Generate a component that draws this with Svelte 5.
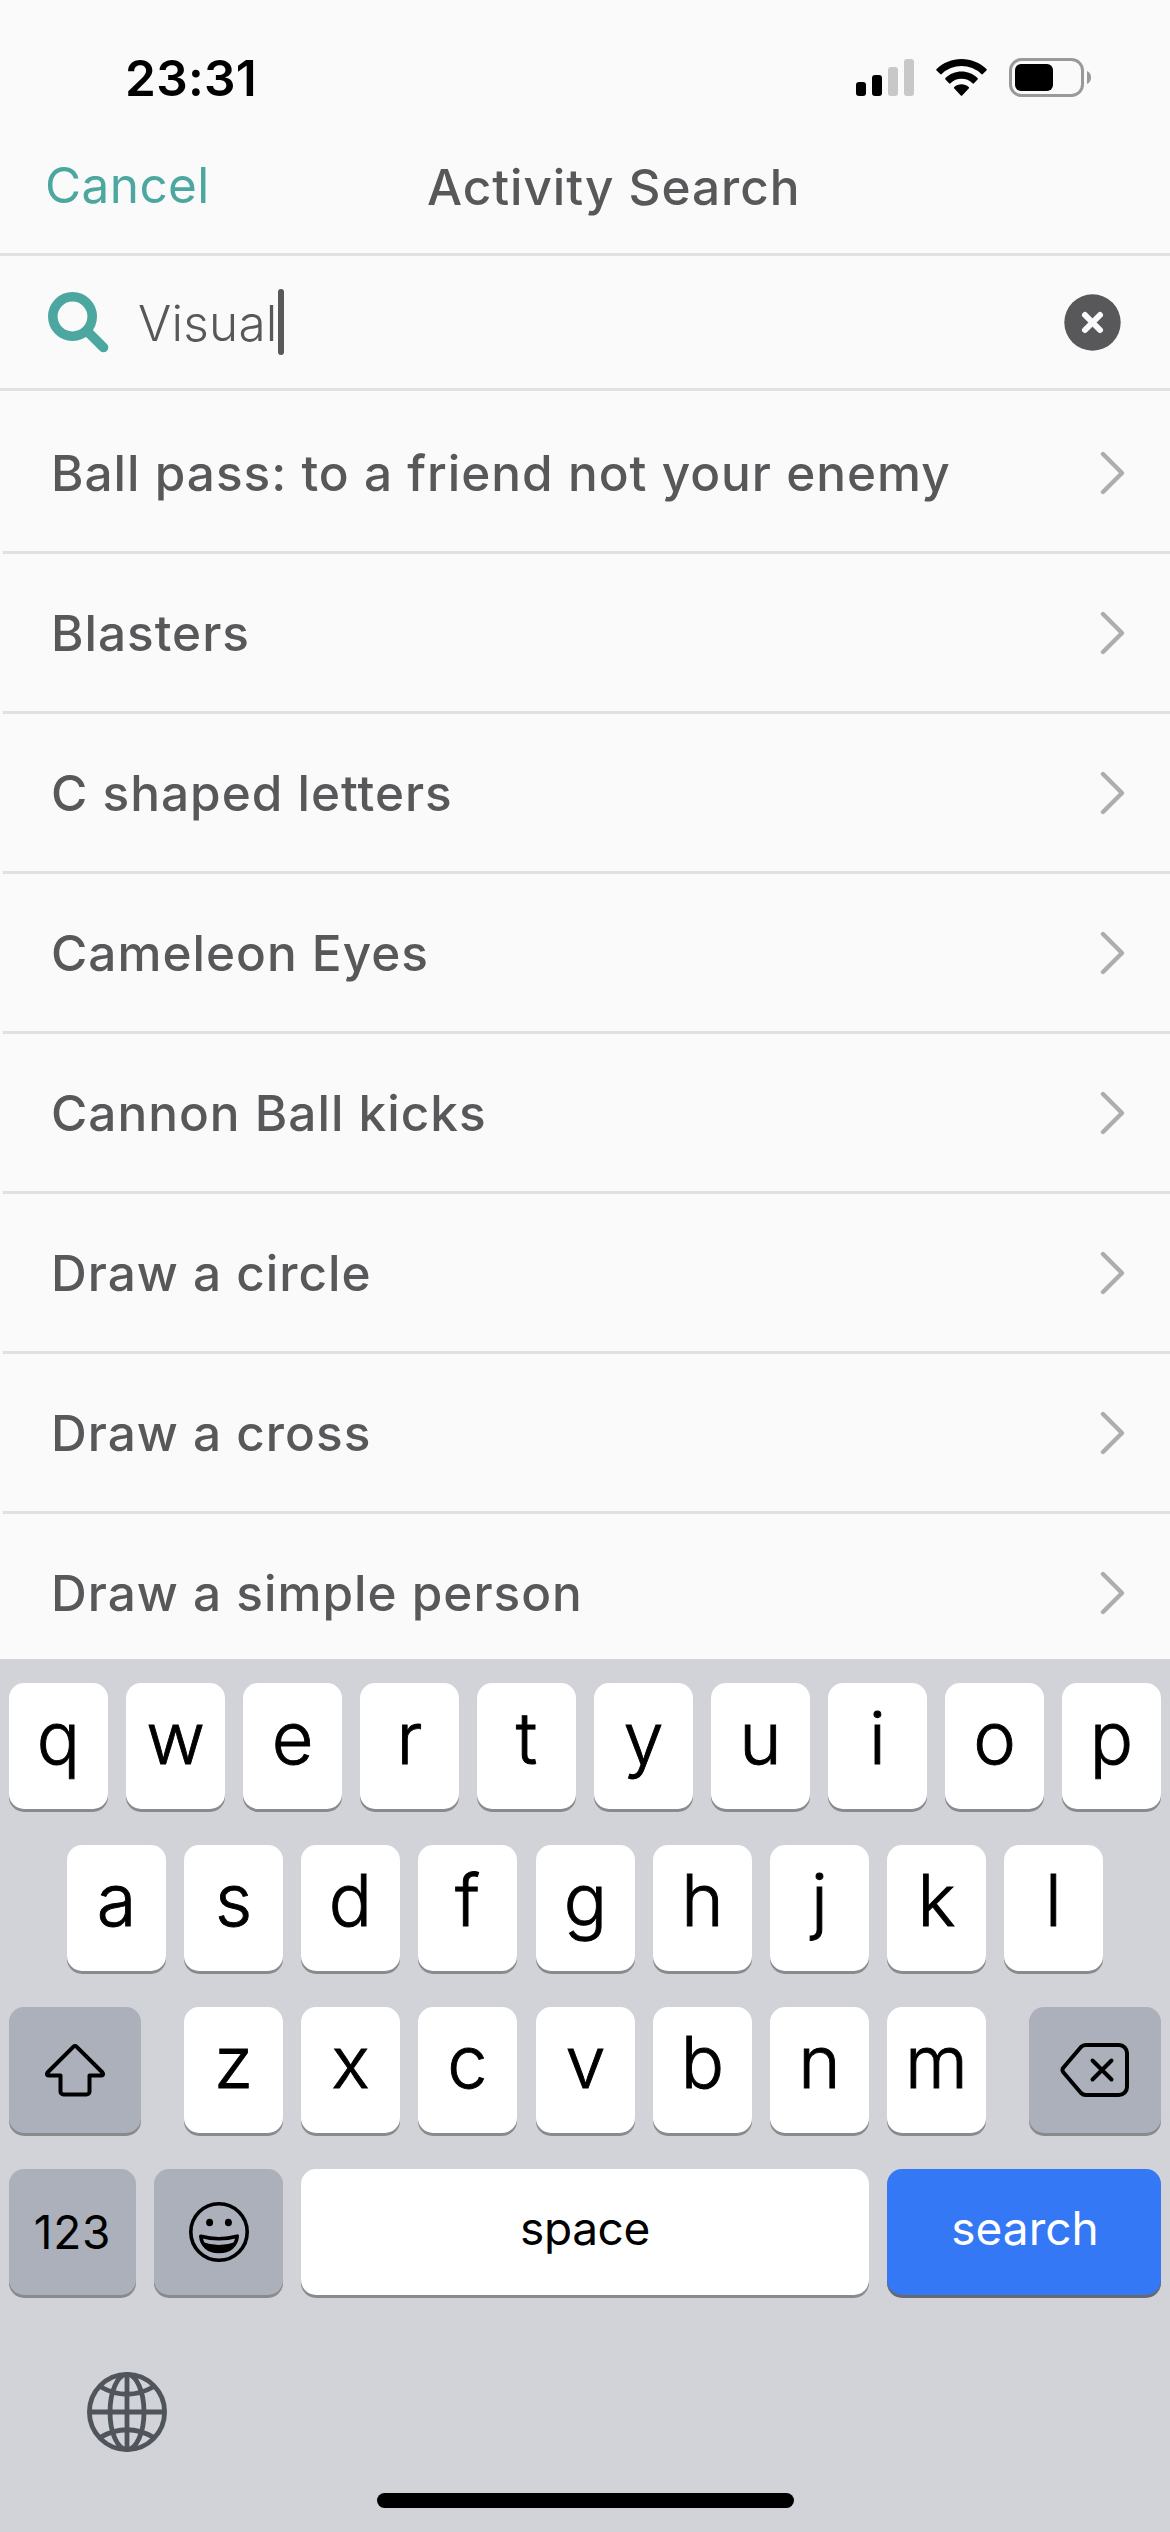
<script>
  const results = [
    'Ball pass: to a friend not your enemy',
    'Blasters',
    'C shaped letters',
    'Cameleon Eyes',
    'Cannon Ball kicks',
    'Draw a circle',
    'Draw a cross',
    'Draw a simple person'
  ];
  const rowOne = [...'qwertyuiop'];
  const rowTwo = [...'asdfghjkl'];
  const rowThree = [...'zxcvbnm'];
</script>

<div class="screen">
  <div class="status">
    <span class="time">23:31</span>
    <div class="indicators">
      <svg class="signal" width="58" height="37" viewBox="0 0 58 37">
        <rect x="0" y="23" width="10" height="14" rx="3" />
        <rect x="16" y="16" width="10" height="21" rx="3" />
        <rect class="off" x="32" y="8" width="10" height="29" rx="3" />
        <rect class="off" x="48" y="0" width="10" height="37" rx="3" />
      </svg>
      <svg class="wifi" width="51" height="37" viewBox="0 0 51 37">
        <path d="M25.500 0C35 0 44 3.700 50.400 10a1 1 0 0 1 0 1.500L46.800 15a1 1 0 0 1-1.500 0A28.500 28.500 0 0 0 5.700 15a1 1 0 0 1-1.500 0L.6 11.500a1 1 0 0 1 0-1.500C7 3.700 16 0 25.500 0Z" />
        <path d="M25.500 12.600c6 0 11.700 2.300 16 6.500a1 1 0 0 1 0 1.500L38 24.200a1 1 0 0 1-1.500 0 16 16 0 0 0-22 0 1 1 0 0 1-1.500 0l-3.500-3.600a1 1 0 0 1 0-1.500c4.300-4.200 10-6.500 16-6.500Z" />
        <path d="M25.500 25.200c2.700 0 5.200 1 7.200 2.700a1 1 0 0 1 0 1.500l-6.500 7a1 1 0 0 1-1.400 0l-6.500-7a1 1 0 0 1 0-1.500c2-1.700 4.500-2.700 7.200-2.700Z" />
      </svg>
      <svg class="battery" width="82" height="39" viewBox="0 0 82 39">
        <rect class="shell" x="1.500" y="1.500" width="72" height="36" rx="11" />
        <rect x="6" y="6" width="38" height="27" rx="6" />
        <path class="nub" d="M78 13c2.500 1 4 3.500 4 6.500s-1.500 5.500-4 6.500Z" />
      </svg>
    </div>
  </div>

  <header class="header">
    <span class="cancel">Cancel</span>
    <h1 class="title">Activity Search</h1>
  </header>

  <div class="search">
    <svg class="glass" width="62" height="62" viewBox="0 0 62 62">
      <circle cx="25.500" cy="25.500" r="19.700" />
      <path d="M41 41 56.500 56.500" />
    </svg>
    <span class="query">Visual</span>
    <span class="caret"></span>
    <svg class="clear" width="57" height="57" viewBox="0 0 57 57">
      <circle cx="28.500" cy="28.500" r="28.200" />
      <path d="M21 21 36 36M36 21 21 36" />
    </svg>
  </div>

  <ul class="results">
    {#each results as item}
      <li class="row">
        <span class="label">{item}</span>
        <svg class="chevron" width="26" height="44" viewBox="0 0 26 44">
          <path d="M3 3 22 22 3 41" />
        </svg>
      </li>
    {/each}
  </ul>

  <div class="keyboard">
    <div class="keys">
      {#each rowOne as k}<span class="key letter">{k}</span>{/each}
    </div>
    <div class="keys second">
      {#each rowTwo as k}<span class="key letter" class:middle={k === 'g'}>{k}</span>{/each}
    </div>
    <div class="keys">
      <span class="key grey shift">
        <svg width="64" height="56" viewBox="0 0 64 56">
          <path d="M30.500 4.700a2 2 0 0 1 3 0L59.500 30.500c1.300 1.400.7 3-1.200 3H46.500v16a3 3 0 0 1-3 3h-23a3 3 0 0 1-3-3v-16H5.700c-1.900 0-2.500-1.600-1.200-3Z" />
        </svg>
      </span>
      {#each rowThree as k}<span class="key letter" class:middle={k === 'v'}>{k}</span>{/each}
      <span class="key grey delete">
        <svg width="72" height="54" viewBox="0 0 72 54">
          <path d="M27 2h33a8 8 0 0 1 8 8v34a8 8 0 0 1-8 8H27a7 7 0 0 1-5-2L4.500 29.500a3.500 3.500 0 0 1 0-5L22 4a7 7 0 0 1 5-2Z" />
          <path d="M33.500 17.500 52.500 36.500M52.500 17.500 33.500 36.500" />
        </svg>
      </span>
    </div>
    <div class="keys">
      <span class="key grey numbers">123</span>
      <span class="key grey emoji">
        <svg width="62" height="62" viewBox="0 0 62 62">
          <circle class="line" cx="31" cy="31" r="28.200" />
          <ellipse cx="21.600" cy="21.500" rx="3.500" ry="3.800" />
          <ellipse cx="40.400" cy="21.500" rx="3.500" ry="3.800" />
          <path class="line" d="M12.800 35.200q18.200 5 36.400 0C48.500 45 41 50.500 31 50.500S13.500 45 12.800 35.200Z" />
          <path d="M14.500 41Q31 47 47.500 41 43 52 31 52T14.500 41Z" />
        </svg>
      </span>
      <span class="key space">space</span>
      <span class="key go">search</span>
    </div>
    <svg class="globe" width="80" height="80" viewBox="0 0 80 80">
      <circle cx="40" cy="40" r="37.600" />
      <ellipse cx="40" cy="40" rx="17" ry="37.600" />
      <path d="M40 2v76M2 40h76M13 14.500q27 15.500 54 0M13 65.500q27-15.500 54 0" />
    </svg>
    <div class="home"></div>
  </div>
</div>

<style>
  :global(body) {
    margin: 0;
    background: #fafafa;
  }
  .screen {
    display: flex;
    flex-direction: column;
    width: 1170px;
    height: 2532px;
    overflow: hidden;
    background: #fafafa;
    color: #58585a;
    font-family: Inter, 'Liberation Sans', sans-serif;
    font-size: 49.5px;
  }
  .status {
    display: flex;
    flex: none;
    align-items: center;
    justify-content: space-between;
    height: 155px;
    padding: 0 79px 0 125px;
    color: #000;
  }
  .time {
    font-weight: 600;
    letter-spacing: 0.3px;
  }
  .indicators {
    display: flex;
    align-items: center;
    gap: 22px;
  }
  .signal .off {
    fill: #c8c8c8;
  }
  .battery .shell {
    fill: none;
    stroke: #999;
    stroke-width: 3;
  }
  .battery .nub {
    fill: #999;
  }
  .header {
    display: flex;
    flex: none;
    align-items: center;
    height: 64px;
    padding: 0 0 34px 45px;
    border-bottom: 3px solid #e1e1e1;
  }
  .cancel {
    width: 382px;
    padding-bottom: 5px;
    color: #4ba7a0;
    letter-spacing: 0.4px;
  }
  .title {
    margin: 0;
    font-size: inherit;
    font-weight: 500;
    letter-spacing: 0.95px;
  }
  .search {
    display: flex;
    flex: none;
    align-items: center;
    height: 132px;
    padding: 0 49px 0 47px;
    border-bottom: 3px solid #e1e1e1;
  }
  .glass {
    fill: none;
    stroke: #4ba7a0;
    stroke-width: 9.6;
    stroke-linecap: round;
  }
  .query {
    margin: 1px 0 0 29px;
    font-weight: 300;
    letter-spacing: 0.2px;
  }
  .caret {
    width: 6px;
    height: 66px;
    border-radius: 3px;
    background: #58585a;
  }
  .clear {
    margin-left: auto;
    fill: #58585a;
  }
  .clear path {
    stroke: #fafafa;
    stroke-width: 6;
    stroke-linecap: round;
  }
  .results {
    flex: none;
    box-sizing: border-box;
    height: 1268px;
    margin: 0;
    padding: 3px 0 0 3px;
    overflow: hidden;
    list-style: none;
  }
  .row {
    display: flex;
    align-items: center;
    justify-content: space-between;
    height: 157px;
    padding: 0 44px 0 48px;
    border-bottom: 3px solid #e1e1e1;
    font-weight: 500;
    letter-spacing: 1px;
  }
  .chevron {
    fill: none;
    stroke: #adadad;
    stroke-width: 4.4;
    stroke-linecap: round;
    stroke-linejoin: round;
  }
  .keyboard {
    display: flex;
    flex: 1;
    flex-direction: column;
    gap: 36px;
    padding: 24px 9px 0;
    background: #d1d3d9;
    color: #000;
  }
  .keys {
    display: flex;
    gap: 18px;
    height: 126px;
  }
  .second {
    padding-left: 58px;
  }
  .key {
    display: flex;
    align-items: center;
    justify-content: center;
    box-sizing: border-box;
    border-radius: 15px;
    background: #fff;
    box-shadow: 0 3px 0 #898a8d;
    font-size: 46px;
  }
  .letter {
    width: 99px;
    padding-bottom: 18px;
    font-size: 72px;
    font-weight: 300;
    -webkit-text-stroke: 0.9px #000;
  }
  .middle {
    margin-left: 1px;
  }
  .grey {
    background: #abb0ba;
  }
  .shift {
    width: 132px;
    margin-right: 25px;
  }
  .delete {
    width: 132px;
    margin-left: 25px;
  }
  .shift svg,
  .delete svg {
    fill: none;
    stroke: #000;
    stroke-width: 4;
    stroke-linecap: round;
    stroke-linejoin: round;
  }
  .numbers {
    width: 127px;
    letter-spacing: 0.8px;
  }
  .emoji {
    width: 129px;
  }
  .emoji .line {
    fill: none;
    stroke: #000;
    stroke-width: 3.6;
    stroke-linejoin: round;
  }
  .space {
    width: 568px;
    padding-bottom: 8px;
    letter-spacing: -0.4px;
  }
  .go {
    width: 274px;
    padding: 0 0 8px 2px;
    background: #3478f6;
    box-shadow: 0 3px 0 #68696c;
    color: #fff;
  }
  .globe {
    margin: 41px 0 0 78px;
    fill: none;
    stroke: #50555c;
    stroke-width: 4.8;
  }
  .home {
    align-self: center;
    width: 417px;
    height: 15px;
    margin-top: 5px;
    border-radius: 8px;
    background: #000;
  }
</style>
